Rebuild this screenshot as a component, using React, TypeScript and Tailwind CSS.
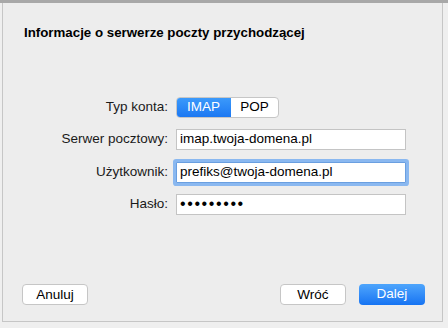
import React from "react";

const font = { fontFamily: '"Liberation Sans", Arial, sans-serif' };

function Field({ children, focused }: { children: React.ReactNode; focused?: boolean }) {
  return (
    <div
      className={
        "h-[21px] w-[230px] bg-white border flex items-center pl-[3px] text-[13.5px] text-black " +
        (focused
          ? "border-[#6a9fe0] ring-[3px] ring-[#8ab8f0] rounded-[1px]"
          : "border-[#c4c4c4]")
      }
    >
      {children}
    </div>
  );
}

function Row({ label, children }: { label: string; children: React.ReactNode }) {
  return (
    <div className="flex items-center">
      <div className="w-[165px] text-right text-[13.5px] text-[#1a1a1a]">{label}</div>
      <div className="ml-[8px]">{children}</div>
    </div>
  );
}

export default function App() {
  return (
    <div className="w-[448px] h-[328px] bg-[#efefef] flex flex-col" style={font}>
      <div className="h-[3px] bg-[#a8a8a8] w-full" />
      <div className="ml-[2px] w-[441px] h-[319px] bg-[#ededed] border-l border-r border-b border-[#c6c6c6] flex flex-col">
        <div className="pl-[21px] pt-[20px] text-[13.3px] font-bold text-black">
          Informacje o serwerze poczty przychodzącej
        </div>
        <div className="mt-[54px] flex flex-col gap-[11px]">
          <Row label="Typ konta:">
            <div className="flex h-[21px] w-[103px] rounded-[4px] border border-[#c6c6c6] overflow-hidden text-[13.5px] bg-white">
              <div className="w-[55px] -my-px -ml-px bg-gradient-to-b from-[#3d9bfb] to-[#1a76f2] text-white flex items-center justify-center rounded-l-[4px]">
                IMAP
              </div>
              <div className="flex-1 flex items-center justify-center text-black">POP</div>
            </div>
          </Row>
          <Row label="Serwer pocztowy:">
            <Field>imap.twoja-domena.pl</Field>
          </Row>
          <div className="mt-[1px]">
            <Row label="Użytkownik:">
              <Field focused>prefiks@twoja-domena.pl</Field>
            </Row>
          </div>
          <Row label="Hasło:">
            <Field>
              <span className="text-[16px] tracking-[1.6px] leading-none">•••••••••</span>
            </Field>
          </Row>
        </div>
        <div className="mt-auto mb-[16px] flex items-center pl-[19px] pr-[17px]">
          <button className="w-[66px] h-[21px] bg-white border border-[#c6c6c6] rounded-[4px] text-[13.5px] text-black">
            Anuluj
          </button>
          <div className="flex-1" />
          <button className="w-[66px] h-[21px] bg-white border border-[#c6c6c6] rounded-[4px] text-[13.5px] text-black">
            Wróć
          </button>
          <button className="ml-[13px] w-[66px] h-[21px] bg-gradient-to-b from-[#4ea5fc] to-[#1573f2] rounded-[4px] text-[13.5px] text-white">
            Dalej
          </button>
        </div>
      </div>
    </div>
  );
}
